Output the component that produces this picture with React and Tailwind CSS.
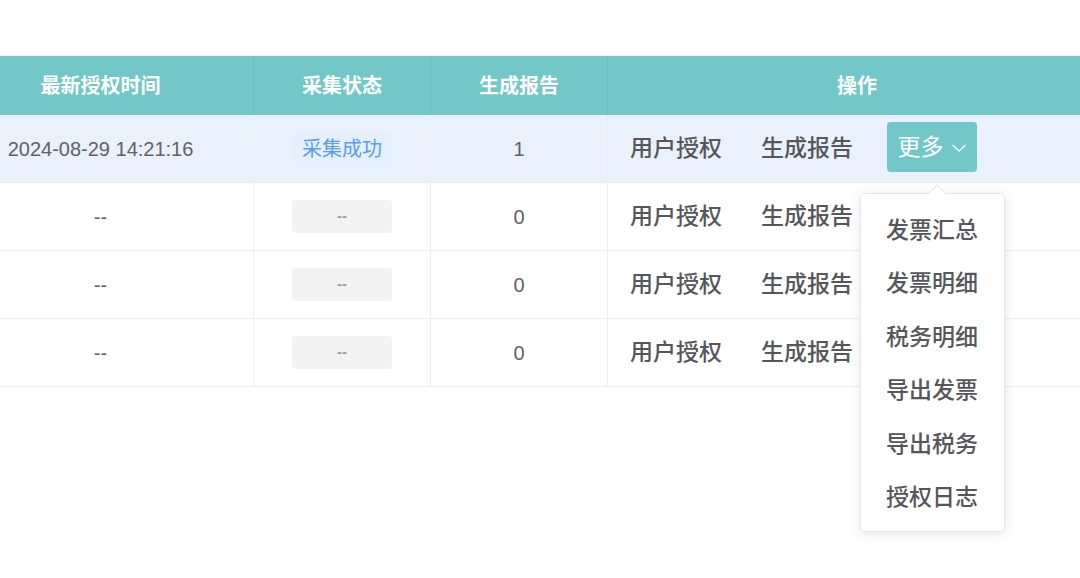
import React from 'react';

const rows = [
  { time: '2024-08-29 14:21:16', status: '采集成功', ok: true, count: '1', active: true },
  { time: '--', status: '--', ok: false, count: '0' },
  { time: '--', status: '--', ok: false, count: '0' },
  { time: '--', status: '--', ok: false, count: '0' },
];

const menuItems = ['发票汇总', '发票明细', '税务明细', '导出发票', '导出税务', '授权日志'];

const Chevron = () => (
  <svg width="16" height="10" viewBox="0 0 16 10" fill="none" className="ml-[7px] mt-[1px]">
    <path d="M2 2.5 L8 8 L14 2.5" stroke="white" strokeWidth="1.3" strokeLinecap="round" strokeLinejoin="round" />
  </svg>
);

const App = () => {
  return (
    <div
      className="relative w-[1080px] h-[578px] bg-white overflow-hidden text-[#606266]"
      style={{ fontFamily: '"Liberation Sans", "Noto Sans CJK SC", sans-serif' }}
    >
      <div className="pt-[55px]">
        <div className="-ml-[52px] w-[1158px] border-t border-[#eef0f3]">
          {/* header */}
          <div className="flex h-[59px] bg-[#73c7c9] text-white text-[20px] font-bold">
            <div className="w-[306px] flex items-center justify-center border-r border-[#6bbec0]">最新授权时间</div>
            <div className="w-[177px] flex items-center justify-center border-r border-[#6bbec0]">采集状态</div>
            <div className="w-[177px] flex items-center justify-center border-r border-[#6bbec0]">生成报告</div>
            <div className="w-[498px] flex items-center justify-center">操作</div>
          </div>

          {/* rows */}
          {rows.map((r, i) => (
            <div
              key={i}
              className={`flex h-[68px] border-b border-[#ebeef5] ${r.active ? 'bg-[#e9f1fc]' : 'bg-white'}`}
            >
              <div className="w-[306px] flex items-center justify-center border-r border-[#ebeef5] text-[20px] text-[#606266]">
                {r.time}
              </div>
              <div className="w-[177px] flex items-center justify-center border-r border-[#ebeef5]">
                {r.ok ? (
                  <span className="w-[100px] h-[33px] flex items-center justify-center rounded-[4px] bg-[#e6f0fd] text-[#5a9cf0] text-[20px] mt-[1px]">
                    {r.status}
                  </span>
                ) : (
                  <span className="w-[100px] h-[33px] flex items-center justify-center rounded-[4px] bg-[#f3f3f3] text-[#9a9a9a] text-[15px] font-bold">
                    {r.status}
                  </span>
                )}
              </div>
              <div className="w-[177px] flex items-center justify-center border-r border-[#ebeef5] text-[20px]">
                {r.count}
              </div>
              <div className="w-[498px] flex items-center pl-[22px] text-[23px] font-medium text-[#55575b]">
                <span>用户授权</span>
                <span className="ml-[39px]">生成报告</span>
                {r.active && (
                  <span className="ml-[34px] -mt-[3px] w-[90px] h-[50px] rounded-[4px] bg-[#73c7c9] text-white font-normal flex items-center justify-center">
                    更多
                    <Chevron />
                  </span>
                )}
              </div>
            </div>
          ))}
        </div>
      </div>

      {/* dropdown */}
      <div className="absolute left-[860px] top-[193px] w-[145px] bg-white border border-[#e4e7ed] rounded-[5px] shadow-[0_2px_12px_rgba(0,0,0,0.1)] pt-[9px] pb-[7px]">
        <div className="absolute left-[70px] -top-[7px] w-[12px] h-[12px] bg-white border-l border-t border-[#e4e7ed] rotate-45" />
        {menuItems.map((m) => (
          <div key={m} className="h-[53.5px] flex items-center pl-[25px] text-[23px] font-medium text-[#55575b]">
            {m}
          </div>
        ))}
      </div>
    </div>
  );
};

export default App;
